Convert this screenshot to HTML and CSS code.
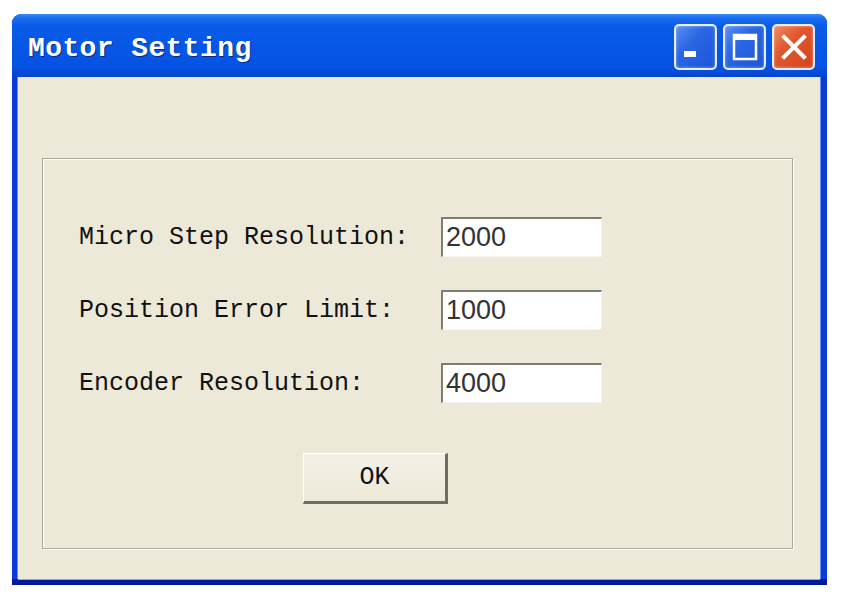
FILE: index.html
```html
<!DOCTYPE html>
<html lang="en">
<head>
    <meta charset="UTF-8">
    <title>Motor Setting</title>
    <link rel="stylesheet" href="styles.css">
</head>
<body>
    <div class="window">
        <div class="titlebar">
            <span class="title">Motor Setting</span>
            <div class="controls">
                <button class="ctl ctl-min" title="Minimize">
                    <svg width="14" height="8" viewBox="0 0 14 8"><rect x="1" y="1" width="12" height="6" fill="#fff"/></svg>
                </button>
                <button class="ctl ctl-max" title="Maximize">
                    <svg width="26" height="28" viewBox="0 0 26 28"><rect x="2" y="2" width="22" height="24" fill="none" stroke="#fff" stroke-width="2.5"/><rect x="2" y="2" width="22" height="5" fill="#fff"/></svg>
                </button>
                <button class="ctl ctl-close" title="Close">
                    <svg width="26" height="26" viewBox="0 0 26 26"><path d="M3 3 L23 23 M23 3 L3 23" stroke="#fff" stroke-width="4" stroke-linecap="square"/></svg>
                </button>
            </div>
        </div>

        <div class="client">
            <div class="group">
                <div class="row">
                    <label for="microStep">Micro Step Resolution:</label>
                    <input type="text" id="microStep" value="2000">
                </div>
                <div class="row">
                    <label for="posError">Position Error Limit:</label>
                    <input type="text" id="posError" value="1000">
                </div>
                <div class="row">
                    <label for="encoder">Encoder Resolution:</label>
                    <input type="text" id="encoder" value="4000">
                </div>
                <button class="ok">OK</button>
            </div>
        </div>
    </div>
</body>
</html>
```

FILE: styles.css
```css
body {
    margin: 0;
    padding: 14px 0 0 12px;
    background-color: #fff;
}
.window {
    width: 815px;
    height: 571px;
    box-sizing: border-box;
    display: flex;
    flex-direction: column;
    border-radius: 9px 9px 0 0;
    background: linear-gradient(to top, #00199c 0, #0019a0 6px, #0a3ad8 6px);
    overflow: hidden;
}
.titlebar {
    height: 63px;
    flex: none;
    display: flex;
    align-items: flex-start;
    justify-content: space-between;
    background: linear-gradient(to bottom, #3b8cf6 0, #1a6cf0 4px, #0a5ce8 12px, #0657e6 50%, #0552e2 85%, #0443cc 100%);
}
.title {
    margin: 19px 0 0 16px;
    font-family: 'Liberation Mono', monospace;
    font-weight: bold;
    font-size: 28px;
    letter-spacing: 0.4px;
    color: #fff;
    text-shadow: 1px 1px 0 #0a2a8a;
}
.controls {
    display: flex;
    gap: 6px;
    margin: 10px 12px 0 0;
}
.ctl {
    width: 43px;
    height: 46px;
    padding: 0;
    border: 2px solid #e8eefc;
    border-radius: 5px;
    display: flex;
    align-items: center;
    justify-content: center;
    background: linear-gradient(to bottom right, #5a8ef2 0, #2a66e4 40%, #1d55d8 100%);
    box-shadow: inset 0 0 3px rgba(255,255,255,0.5);
}
.ctl-min svg {
    margin: 14px 12px 0 0;
}
.ctl-close {
    background: linear-gradient(to bottom right, #ef8a62 0, #e2582e 40%, #d2431c 100%);
}
.client {
    flex: 1;
    margin: 0 7px 6px 6px;
    padding: 81px 27px 30px 24px;
    background-color: #ece9d8;
    box-shadow: -1px 0 0 #5f8bf0, 1px 0 0 #5f8bf0, 0 1px 0 #86a6ee;
}
.group {
    border: 1px solid #aca899;
    box-shadow: 1px 1px 0 #fff, inset 1px 1px 0 #fff;
    padding: 58px 0 44px 36px;
    display: flex;
    flex-direction: column;
    align-items: flex-start;
    gap: 33px;
}
.row {
    display: flex;
    align-items: center;
}
.row label {
    width: 362px;
    font-family: 'Liberation Mono', monospace;
    font-size: 25px;
    color: #111;
}
.row input {
    width: 161px;
    height: 40px;
    box-sizing: border-box;
    margin: 0;
    padding: 0 0 0 3px;
    border-style: solid;
    border-width: 2px 1px 1px 2px;
    border-color: #7f7d72 #f4f3ee #f4f3ee #7f7d72;
    background-color: #fff;
    font-family: 'Liberation Sans', Arial, sans-serif;
    font-size: 27px;
    color: #333;
    outline: none;
}
.ok {
    margin: 17px 0 0 224px;
    width: 145px;
    height: 51px;
    padding: 0;
    border-style: solid;
    border-width: 1px 3px 3px 1px;
    border-color: #fff #6f6d62 #6f6d62 #fff;
    background: linear-gradient(to bottom, #f4f2e8, #ece9d8);
    font-family: 'Liberation Mono', monospace;
    font-size: 25px;
    color: #111;
}
```
